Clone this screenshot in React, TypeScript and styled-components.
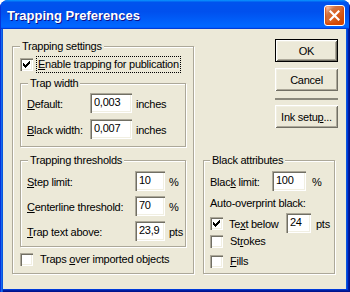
import { FC, ReactNode } from "react";
import styled, { createGlobalStyle } from "styled-components";

const GlobalStyle = createGlobalStyle`
  html, body {
    margin: 0;
    padding: 0;
    background: #ffffff;
  }

  body {
    font-family: "Liberation Sans", Arial, sans-serif;
    font-size: 11px;
    color: #000;
  }

  #root {
    width: 350px;
    height: 292px;
  }
`;

const CheckMark: FC = () => (
  <svg width="7" height="7" viewBox="0 0 7 7">
    <path
      d="M0 2h1v3H0zM1 3h1v3H1zM2 4h1v3H2zM3 3h1v3H3zM4 2h1v3H4zM5 1h1v3H5zM6 0h1v3H6z"
      fill="#000"
    />
  </svg>
);

const CloseIcon: FC = () => (
  <svg width="11" height="11" viewBox="0 0 11 11">
    <path d="M1.5 1.5l8 8M9.5 1.5l-8 8" stroke="#fff" strokeWidth="2.2" strokeLinecap="square" />
  </svg>
);

type CheckProps = { checked?: boolean; children: ReactNode; focus?: boolean; gap?: number; height?: number; mt?: number };

const CheckItem: FC<CheckProps> = ({ checked, children, focus, gap = 5, height = 16, mt = 0 }) => (
  <CheckRow $height={height} $mt={mt}>
    <Box>{checked && <CheckMark />}</Box>
    <CheckText $gap={gap} $focus={focus}>
      {children}
    </CheckText>
  </CheckRow>
);

const App: FC = () => {
  return (
    <>
      <GlobalStyle />
      <Window>
        <TitleBar>
          <Title>Trapping Preferences</Title>
          <CloseButton>
            <CloseIcon />
          </CloseButton>
        </TitleBar>
        <Frame>
          <Client>
            <LeftColumn>
              <Group $pad="0 7px 5px 7px">
                <Legend>Trapping settings</Legend>
                <CheckItem checked focus gap={4} height={17} mt={3}>
                  <u>E</u>nable trapping for publication
                </CheckItem>

                <Group $pad="0 6px 7px 6px" $mt={10}>
                  <Legend $ml={1}>Trap width</Legend>
                  <FieldRow $mt={3}>
                    <Label $w={63}>
                      <u>D</u>efault:
                    </Label>
                    <Field $w={42} readOnly value="0,003" />
                    <Unit>inches</Unit>
                  </FieldRow>
                  <FieldRow $mt={6}>
                    <Label $w={63}>
                      <u>B</u>lack width:
                    </Label>
                    <Field $w={42} readOnly value="0,007" />
                    <Unit>inches</Unit>
                  </FieldRow>
                </Group>

                <Group $pad="0 6px 5px 6px" $mt={13}>
                  <Legend $ml={1}>Trapping thresholds</Legend>
                  <FieldRow $mt={4}>
                    <Label $w={108}>
                      <u>S</u>tep limit:
                    </Label>
                    <Field $w={30} readOnly value="10" />
                    <Unit>%</Unit>
                  </FieldRow>
                  <FieldRow $mt={5}>
                    <Label $w={108}>
                      <u>C</u>enterline threshold:
                    </Label>
                    <Field $w={30} readOnly value="70" />
                    <Unit>%</Unit>
                  </FieldRow>
                  <FieldRow $mt={5}>
                    <Label $w={108}>
                      <u>T</u>rap text above:
                    </Label>
                    <Field $w={30} readOnly value="23,9" />
                    <Unit>pts</Unit>
                  </FieldRow>
                </Group>

                <CheckItem gap={6} height={17} mt={4}>
                  Traps <u>o</u>ver imported objects
                </CheckItem>
              </Group>
            </LeftColumn>

            <RightColumn>
              <Button $default>OK</Button>
              <Button $mt={6}>Cancel</Button>
              <Separator />
              <Button $mt={5}>
                Ink setu<u>p</u>...
              </Button>

              <BlackGroup $pad="0 6px 4px 6px" $mt={32}>
                <Legend>Black attributes</Legend>
                <FieldRow $mt={4}>
                  <Label $w={62}>
                    Blac<u>k</u> limit:
                  </Label>
                  <Field $w={34} readOnly value="100" />
                  <Unit $ml={6}>%</Unit>
                </FieldRow>
                <PlainText $mt={6}>Auto-overprint black:</PlainText>
                <FieldRow $mt={3}>
                  <Box>
                    <CheckMark />
                  </Box>
                  <Label $w={57} $ml={6}>
                    Te<u>x</u>t below
                  </Label>
                  <Field $w={25} readOnly value="24" />
                  <Unit $ml={5}>pts</Unit>
                </FieldRow>
                <CheckItem gap={6}>
                  St<u>r</u>okes
                </CheckItem>
                <CheckItem gap={6} mt={4}>
                  <u>F</u>ills
                </CheckItem>
              </BlackGroup>
            </RightColumn>
          </Client>
        </Frame>
      </Window>
    </>
  );
};

export default App;

const Window = styled.div`
  width: 350px;
  height: 292px;
  display: flex;
  flex-direction: column;
  border-radius: 8px 8px 0 0;
  overflow: hidden;
  background: #0831d9;
`;

const TitleBar = styled.div`
  height: 29px;
  flex-shrink: 0;
  box-sizing: border-box;
  display: flex;
  align-items: center;
  justify-content: space-between;
  padding: 1px 5px 0 7px;
  background: linear-gradient(
    180deg,
    #0997ff,
    #0053ee 8%,
    #0050ee 40%,
    #0066ff 88%,
    #0066ff 93%,
    #005bff 95%,
    #003dd7 96%,
    #003dd7
  );
  box-shadow: inset 1px 0 #0831d9, inset -1px 0 #00138c;
`;

const Title = styled.div`
  font-family: "Liberation Sans", Arial, sans-serif;
  font-weight: bold;
  font-size: 13px;
  color: #ffffff;
  text-shadow: 1px 1px #0f1089;
`;

const CloseButton = styled.div`
  width: 21px;
  height: 21px;
  box-sizing: border-box;
  border: 1px solid #ffffff;
  border-radius: 3px;
  display: grid;
  place-items: center;
  background: radial-gradient(circle at 90% 90%, #cc4600 0%, #dc6527 55%, #cd7546 70%, #ffccb2 90%, #ffffff 100%);
  box-shadow: inset 0 -1px 2px 1px #da4600;
`;

const Frame = styled.div`
  flex: 1;
  display: flex;
  padding: 0 4px 3px 3px;
  box-shadow: inset 1px 0 #0831d9, inset 2px 0 #166aee, inset 3px 0 #0855dd, inset -1px -1px #00138c,
    inset -2px -2px #001ea0, inset -3px -3px #003bda, inset -4px 0 #0855dd;
`;

const Client = styled.div`
  flex: 1;
  display: flex;
  align-items: flex-start;
  gap: 9px;
  padding: 10px 8px 0 9px;
  background: #ece9d8;
`;

const LeftColumn = styled.div`
  width: 182px;
  display: flex;
  flex-direction: column;
  padding-top: 7px;
`;

const RightColumn = styled.div`
  width: 135px;
  display: flex;
  flex-direction: column;
  align-items: flex-end;
`;

const Group = styled.div<{ $pad: string; $mt?: number }>`
  display: flex;
  flex-direction: column;
  box-sizing: border-box;
  margin-top: ${(p) => p.$mt ?? 0}px;
  padding: ${(p) => p.$pad};
  border: 1px solid #aca899;
  box-shadow: inset 1px 1px #ffffff, 1px 1px #ffffff;
`;

const BlackGroup = styled(Group)`
  align-self: flex-start;
  width: 132px;
`;

const Legend = styled.div<{ $ml?: number }>`
  align-self: flex-start;
  height: 13px;
  line-height: 13px;
  margin: -7px 0 0 ${(p) => p.$ml ?? 0}px;
  padding: 0 2px;
  background: #ece9d8;
  letter-spacing: -0.25px;
`;

const CheckRow = styled.div<{ $height: number; $mt: number }>`
  display: flex;
  align-items: center;
  height: ${(p) => p.$height}px;
  margin-top: ${(p) => p.$mt}px;
`;

const Box = styled.div`
  width: 13px;
  height: 13px;
  flex-shrink: 0;
  box-sizing: border-box;
  display: grid;
  place-items: center;
  background: #ffffff;
  box-shadow: inset 1px 1px #aca899, inset 2px 2px #716f64, inset -1px -1px #ffffff, inset -2px -2px #f1efe2;
`;

const CheckText = styled.span<{ $gap: number; $focus?: boolean }>`
  margin-left: ${(p) => p.$gap}px;
  padding: 0 1px;
  line-height: 15px;
  letter-spacing: -0.25px;
  outline: ${(p) => (p.$focus ? "1px dotted #000" : "none")};
`;

const FieldRow = styled.div<{ $mt?: number }>`
  display: flex;
  align-items: center;
  height: 20px;
  margin-top: ${(p) => p.$mt ?? 0}px;
`;

const Label = styled.span<{ $w: number; $ml?: number }>`
  width: ${(p) => p.$w}px;
  margin-left: ${(p) => p.$ml ?? 0}px;
  flex-shrink: 0;
  padding-top: 2px;
  letter-spacing: -0.25px;
  white-space: nowrap;
`;

const Field = styled.input<{ $w: number }>`
  width: ${(p) => p.$w}px;
  height: 20px;
  box-sizing: border-box;
  margin: 0;
  padding: 0 2px 2px 4px;
  border: none;
  outline: none;
  font-family: "Liberation Sans", Arial, sans-serif;
  font-size: 11px;
  letter-spacing: -0.25px;
  color: #000;
  background: #ffffff;
  box-shadow: inset 1px 1px #aca899, inset 2px 2px #716f64, inset -1px -1px #ffffff, inset -2px -2px #f1efe2;
`;

const Unit = styled.span<{ $ml?: number }>`
  margin-left: ${(p) => p.$ml ?? 4}px;
  padding-top: 2px;
  letter-spacing: -0.25px;
`;

const PlainText = styled.div<{ $mt?: number }>`
  height: 13px;
  line-height: 13px;
  margin-top: ${(p) => p.$mt ?? 0}px;
  letter-spacing: -0.25px;
`;

const Button = styled.div<{ $default?: boolean; $mt?: number }>`
  width: 63px;
  height: 23px;
  flex-shrink: 0;
  box-sizing: border-box;
  margin-top: ${(p) => p.$mt ?? 0}px;
  display: flex;
  align-items: center;
  justify-content: center;
  background: #ece9d8;
  letter-spacing: -0.25px;
  border: ${(p) => (p.$default ? "1px solid #000" : "none")};
  box-shadow: inset 1px 1px #ffffff, inset -1px -1px #716f64, inset 2px 2px #f1efe2, inset -2px -2px #aca899;
`;

const Separator = styled.div`
  width: 63px;
  height: 2px;
  margin-top: 7px;
  background: #8a887c;
`;
